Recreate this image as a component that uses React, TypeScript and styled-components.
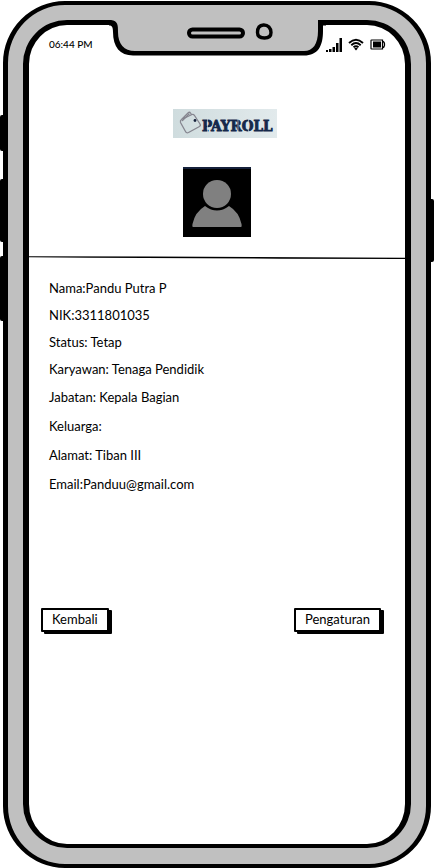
import React from "react";
import styled, { createGlobalStyle } from "styled-components";

const GlobalStyle = createGlobalStyle`
  * { box-sizing: border-box; }
  body {
    margin: 0;
    background: #fff;
    color: #000;
    font-family: Lato, "Open Sans", sans-serif;
  }
`;

const Page = styled.div`
  min-height: 100vh;
  display: flex;
  padding: 1px 3px 0;
`;

const Device = styled.div`
  position: relative;
  flex: 1;
  display: flex;
  border: 5px solid #000;
  border-top-width: 4px;
  border-bottom-width: 4px;
  border-radius: 62px;
  background: #c0c0c0;
  padding: 15px 15px 16px;
`;

const SideKey = styled.span<{ $side: "left" | "right"; $top: number; $length: number }>`
  position: absolute;
  ${(p) => p.$side}: -8px;
  top: ${(p) => p.$top}px;
  width: 6px;
  height: ${(p) => p.$length}px;
  border-radius: 2px;
  background: #000;
`;

const Screen = styled.main`
  flex: 1;
  display: flex;
  flex-direction: column;
  border: 6px solid #000;
  border-top-width: 5px;
  border-bottom-width: 4px;
  border-radius: 44px;
  background: #fff;
`;

const StatusBar = styled.header`
  display: grid;
  grid-template-columns: 1fr 217px 1fr;
  align-items: start;
  height: 84px;
`;

const Clock = styled.time`
  padding: 12px 0 0 20px;
  font-size: 10px;
  line-height: 14px;
  font-weight: 500;
  white-space: nowrap;
`;

const Notch = styled.svg`
  display: block;
  margin-top: -5px;
`;

const Indicators = styled.div`
  display: flex;
  align-items: center;
  gap: 5px;
  padding-top: 12px;
`;

const Profile = styled.section`
  display: flex;
  flex-direction: column;
  align-items: center;
  gap: 29px;
  padding-bottom: 19px;
`;

const Logo = styled.svg`
  display: block;
  margin-left: 16px;
`;

const Picture = styled.svg`
  display: block;
`;

const Divider = styled.svg`
  display: block;
  width: 100%;
  height: 4px;
`;

const Details = styled.section`
  padding: 15px 20px 0;
`;

const Group = styled.ul<{ $pitch: number }>`
  list-style: none;
  margin: 0;
  padding: 0;
  font-size: 13px;
  line-height: ${(p) => p.$pitch}px;
`;

const Actions = styled.footer`
  display: flex;
  justify-content: space-between;
  padding: 109px 24px 40px 12px;
`;

const Button = styled.button`
  height: 24px;
  padding: 0 9px 2px;
  border: 2px solid #000;
  border-radius: 1px;
  background: #fff;
  box-shadow: 3px 2px 0 #000;
  color: #000;
  font: inherit;
  font-size: 13px;
  line-height: 18px;
  cursor: pointer;
`;

const personal = ["Nama:Pandu Putra P", "NIK:3311801035", "Status: Tetap", "Karyawan: Tenaga Pendidik"];
const contact = ["Jabatan: Kepala Bagian", "Keluarga:", "Alamat: Tiban III", "Email:Panduu@gmail.com"];

function NotchShape() {
  return (
    <Notch width="217" height="36" viewBox="108 20 217 36" aria-hidden="true">
      <path d="M108 20H325V25.500H322V31C322 46 317 55.500 303 55.500H132C119 55.500 112 47 112 32C112 27 111 25.500 108 25.500Z" fill="#000" />
      <path d="M112 19H317V31C317 44 312 51 303 51H134C123 51 117 44 117 32C117 25 117 21 110 20Z" fill="#c0c0c0" />
      <rect x="188" y="29.500" width="54" height="7" rx="3.500" fill="#c0c0c0" stroke="#000" strokeWidth="4" />
      <path d="M262.500 25C267 24.800 270 28 270 32.500C270 36 267.500 38 263.500 38C259 38 256.500 36 256.500 32.500C256.500 28 258.500 25.200 262.500 25Z" fill="#c0c0c0" stroke="#000" strokeWidth="3.400" />
    </Notch>
  );
}

function StatusIcons() {
  return (
    <Indicators>
      <svg width="17" height="15" viewBox="0 0 17 15" aria-label="Signal" role="img">
        <path d="M0 13h2v2H0zM3 12h2.500v3H3zM6.500 10H9v5H6.500zM10 6h2.500v9H10zM13.500 1H16v14h-2.500z" />
      </svg>
      <svg width="16" height="13" viewBox="0 0 16 13" aria-label="Wi-Fi" role="img">
        <path d="M1 5Q8-1.500 15 5M3.300 7.200Q8 3 12.700 7.200M5.500 9.300Q8 7.200 10.500 9.300" fill="none" stroke="#000" strokeWidth="1.900" />
        <path d="M6.200 10.500Q8 9.200 9.800 10.500L8 12.500Z" />
      </svg>
      <svg width="18" height="11" viewBox="-1 0 18 11" aria-label="Battery" role="img">
        <path d="M1.500 1H12.500V10H1.500Q1 10 1 9.500V1.500Q1 1 1.500 1ZM12.500 2Q15 3 14.500 6.500Q14 8.500 12.500 9" fill="none" stroke="#000" strokeWidth="1.200" />
        <rect x="3" y="2.500" width="8" height="6" />
      </svg>
    </Indicators>
  );
}

function PayrollLogo() {
  return (
    <Logo width="104" height="29" viewBox="0 0 104 29" role="img" aria-label="Payroll">
      <defs>
        <linearGradient id="logoBackground">
          <stop offset="0" stopColor="#cfdcde" />
          <stop offset="1" stopColor="#e2eaec" />
        </linearGradient>
      </defs>
      <rect width="104" height="29" fill="url(#logoBackground)" />
      <g fill="none" stroke="#85858f" strokeWidth="1.300" strokeLinejoin="round" strokeLinecap="round">
        <path d="M8.500 10.500L19 5.500Q20.500 5 21.500 6.500L27 15Q28 16.500 26.500 17.500L15.500 23.500Q13.500 24.500 12.500 22.500L7.500 13.500Q7 11.500 8.500 10.500L15 4Q16.500 2.500 17.500 4L18.500 5.500" />
        <path d="M9.500 11.500L16 5" />
      </g>
      <circle cx="22" cy="11.500" r="1.400" fill="#15213b" />
      <text x="29" y="22" fontFamily="DejaVu Serif Condensed, Liberation Serif, serif" fontWeight="700" fontSize="15" fill="#15294b" stroke="#15294b" strokeWidth=".800">PAYROLL</text>
      <path d="M34.500 9V24M65 9V24M75.500 9V24" stroke="#d8e2e4" strokeWidth=".600" />
    </Logo>
  );
}

function Avatar() {
  return (
    <Picture width="68" height="70" viewBox="0 0 68 70" role="img" aria-label="Pandu Putra P">
      <rect width="68" height="70" />
      <rect width="68" height="2" fill="#15213b" />
      <path d="M10 60Q9 60 9.500 57Q12 45 22 39Q34 48 46 39Q56 45 58.500 57Q59 60 58 60Z" fill="#808080" />
      <circle cx="34" cy="27" r="16" />
      <circle cx="34" cy="27" r="14" fill="#808080" />
    </Picture>
  );
}

export default function App() {
  return (
    <>
      <GlobalStyle />
      <Page>
        <Device>
          <SideKey $side="left" $top={110} $length={36} />
          <SideKey $side="left" $top={174} $length={63} />
          <SideKey $side="left" $top={251} $length={65} />
          <SideKey $side="right" $top={194} $length={63} />
          <Screen>
            <StatusBar>
              <Clock>06:44 PM</Clock>
              <NotchShape />
              <StatusIcons />
            </StatusBar>
            <Profile>
              <PayrollLogo />
              <Avatar />
            </Profile>
            <Divider viewBox="0 0 375 4" preserveAspectRatio="none" aria-hidden="true">
              <path d="M0 .200L120 .600L375 1.800V3L250 2.700L60 1.700L0 1.200Z" />
            </Divider>
            <Details>
              <Group $pitch={27}>
                {personal.map((line) => (
                  <li key={line}>{line}</li>
                ))}
              </Group>
              <Group $pitch={29}>
                {contact.map((line) => (
                  <li key={line}>{line}</li>
                ))}
              </Group>
            </Details>
            <Actions>
              <Button type="button">Kembali</Button>
              <Button type="button">Pengaturan</Button>
            </Actions>
          </Screen>
        </Device>
      </Page>
    </>
  );
}
